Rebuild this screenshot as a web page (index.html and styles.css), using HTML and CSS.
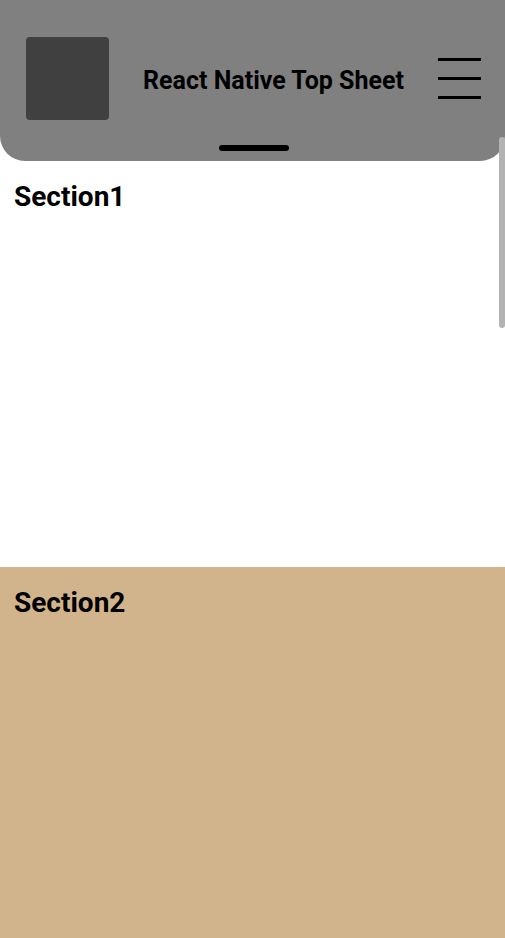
FILE: index.html
```html
<!DOCTYPE html>
<html>
<head>
<meta charset="utf-8">
<link rel="stylesheet" href="styles.css">
</head>
<body>
<div class="screen">
  <header class="sheet">
    <div class="row">
      <div class="logo"></div>
      <div class="title">React Native Top Sheet</div>
      <div class="menu"><span></span><span></span><span></span></div>
    </div>
    <div class="handle"></div>
  </header>
  <section class="section s1"><h2>Section1</h2></section>
  <section class="section s2"><h2>Section2</h2></section>
  <div class="scrollbar"></div>
</div>
</body>
</html>
```
FILE: styles.css
```css
* { box-sizing: border-box; }
html, body { margin: 0; padding: 0; }
body { font-family: Roboto, "Liberation Sans", sans-serif; background: #fff; }
.screen { position: relative; width: 505px; height: 938px; overflow: hidden; display: flex; flex-direction: column; }
.sheet { background: #808080; border-radius: 0 0 25px 25px; padding: 37px 24px 10px 26px; display: flex; flex-direction: column; align-items: center; flex: none; }
.row { width: 100%; height: 83px; display: flex; align-items: center; justify-content: space-between; }
.logo { width: 83px; height: 83px; background: #404040; border-radius: 4px; }
.title { font-size: 25px; font-weight: 700; color: #000; margin-top: 3px; }
.menu { width: 43px; height: 41px; display: flex; flex-direction: column; justify-content: space-between; }
.menu span { display: block; height: 3px; background: #000; }
.handle { width: 70px; height: 6px; border-radius: 3px; background: #000; margin-top: 25px; }
.section { padding: 22px 14px; }
.section h2 { margin: 0; font-size: 28px; line-height: 28px; font-weight: 700; color: #000; }
.s1 { height: 406px; background: #fff; }
.s2 { flex: 1; background: #d2b48c; }
.scrollbar { position: absolute; right: 0; top: 137px; width: 6px; height: 191px; background: #b3b3b3; border-radius: 3px; }
```
